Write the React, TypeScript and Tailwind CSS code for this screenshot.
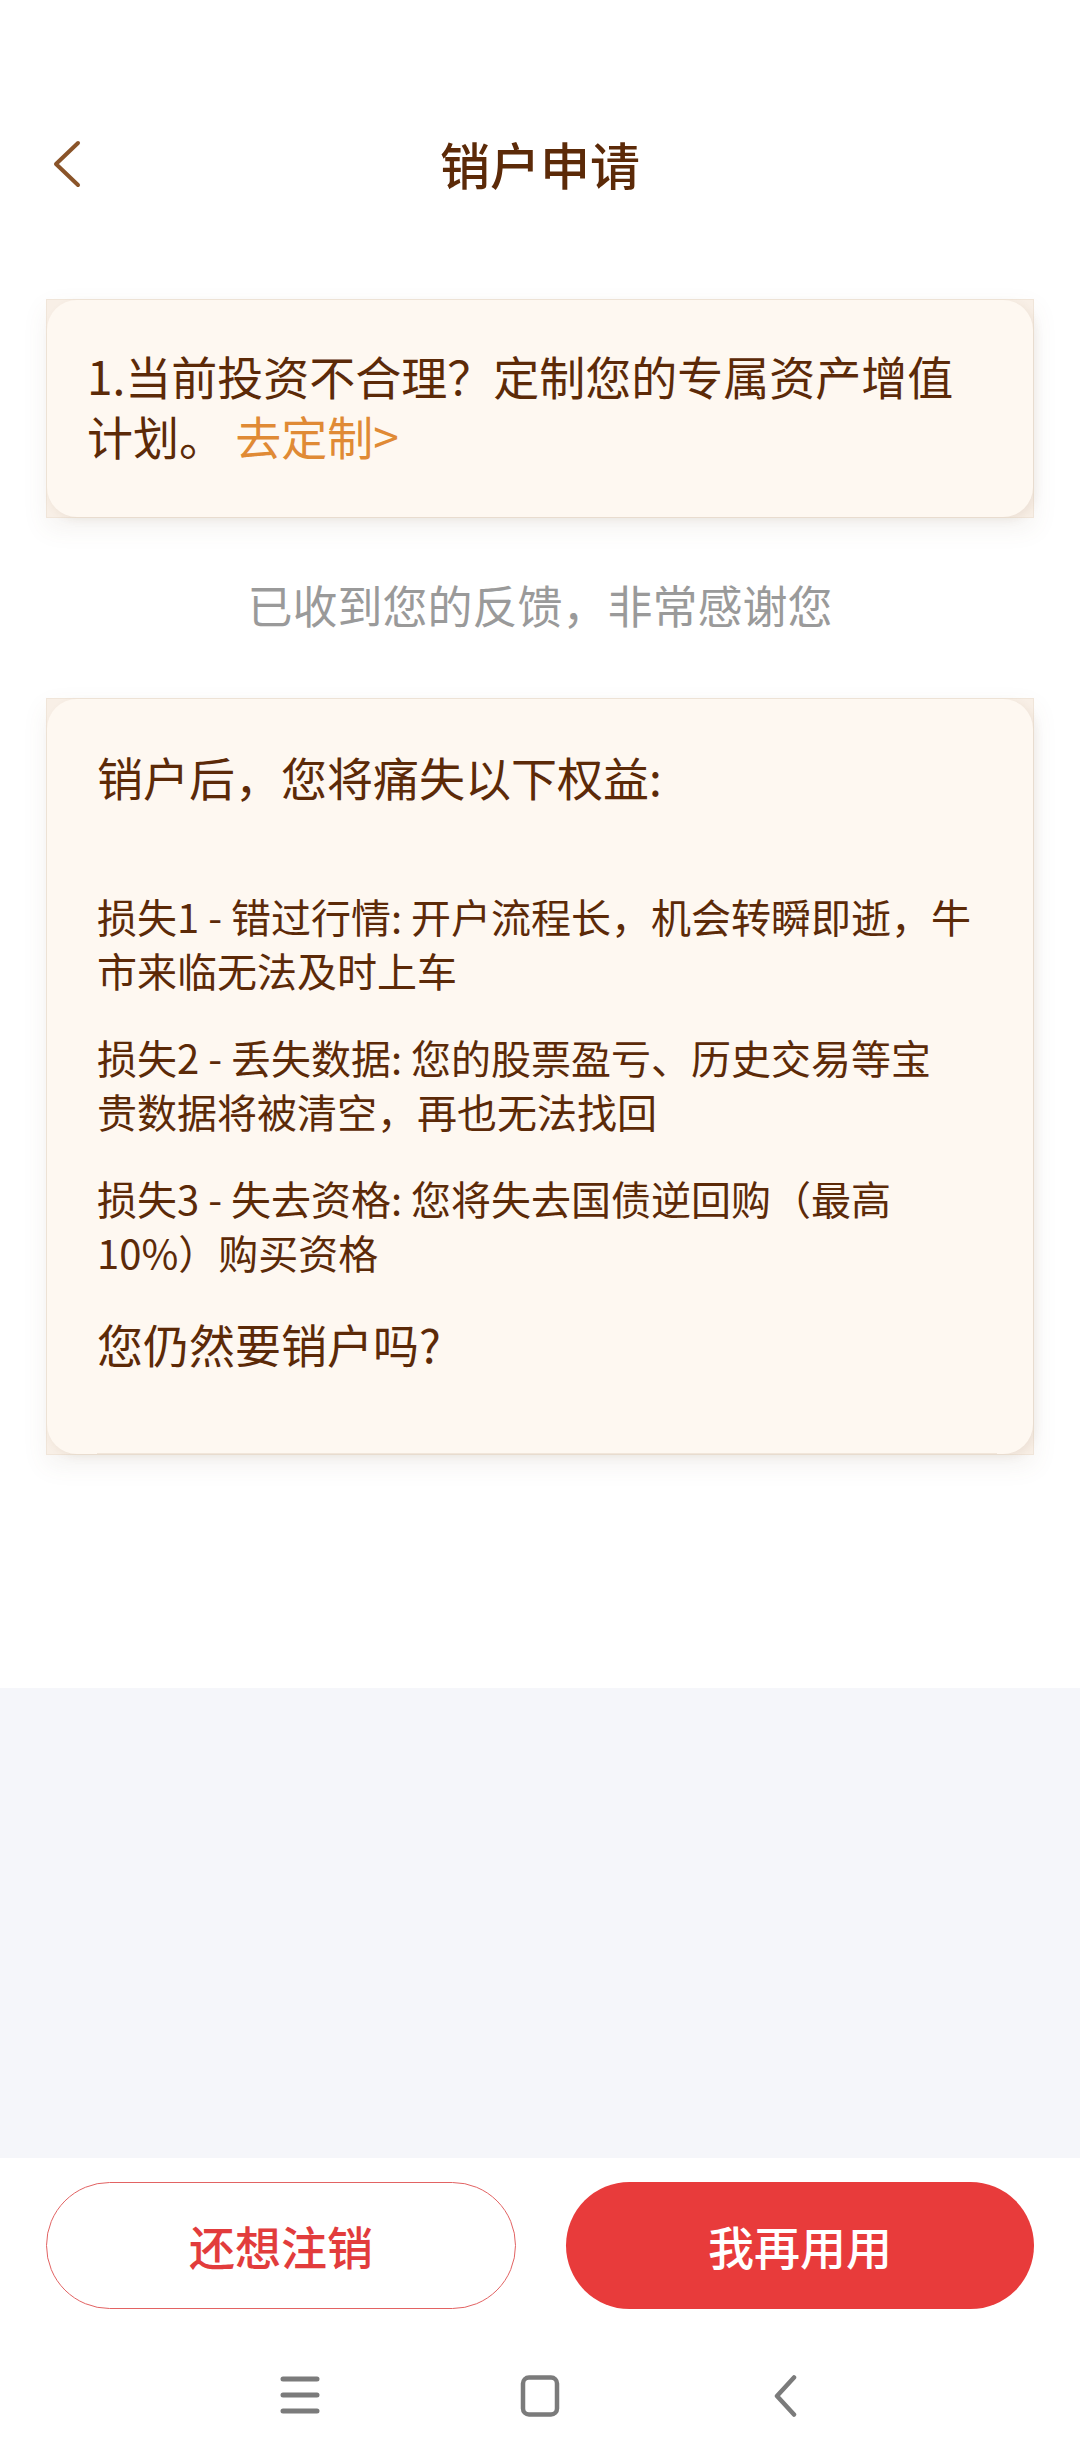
const font = { fontFamily: '"Noto Sans CJK SC", "Noto Sans", sans-serif' }

function BackIcon() {
  return (
    <svg width="32" height="48" viewBox="0 0 32 48" fill="none">
      <path d="M26 3 L4 24 L26 45" stroke="#8a5429" strokeWidth="4" strokeLinecap="round" strokeLinejoin="round" />
    </svg>
  )
}

function NavBar() {
  return (
    <div className="flex h-[151px] items-start justify-center gap-[200px] pt-[66px]">
      <svg width="40" height="40" viewBox="0 0 40 40" fill="none">
        <path d="M3 4 H37 M3 20 H37 M3 36 H37" stroke="#7b7b7b" strokeWidth="5" strokeLinecap="round" />
      </svg>
      <svg width="40" height="42" viewBox="0 0 40 42" fill="none">
        <rect x="3" y="2.5" width="34" height="37" rx="6" stroke="#7b7b7b" strokeWidth="4.5" />
      </svg>
      <svg width="40" height="42" viewBox="0 0 40 42" fill="none">
        <path d="M34 2.5 L17 21 L34 39.5" stroke="#7b7b7b" strokeWidth="4.5" strokeLinecap="round" strokeLinejoin="round" />
      </svg>
    </div>
  )
}

export default function App() {
  return (
    <div className="flex h-[2460px] w-[1080px] flex-col bg-white" style={font}>
      {/* top content */}
      <div className="h-[1688px] bg-white pt-[98px]">
        <div className="grid h-[130px] grid-cols-[160px_1fr_160px] items-center">
          <div className="pl-[52px] pt-[2px]">
            <BackIcon />
          </div>
          <h1 className="text-center text-[50px] font-medium leading-none text-[#5c2a08]">销户申请</h1>
          <div />
        </div>

        <div className="mx-[46px] mt-[71px] border border-[#f0e5d9] bg-[#f8efe6] shadow-[0_10px_24px_rgba(120,90,60,0.08)]">
          <div className="rounded-[30px] bg-[#fef8f1] pb-[52px] pl-[40px] pr-[36px] pt-[45px] text-[46px] leading-[60px] text-[#5c2a08] shadow-[3px_3px_8px_rgba(120,80,40,0.08)]">
            1.当前投资不合理？定制您的专属资产增值
            <br />
            计划。 <span className="text-[#e08a35]">去定制&gt;</span>
          </div>
        </div>

        <p className="mt-[57px] text-center text-[45px] leading-[60px] text-[#9a9a9a]">已收到您的反馈，非常感谢您</p>

        <div className="mx-[46px] mt-[63px] border border-[#f0e5d9] bg-[#f8efe6] shadow-[0_10px_24px_rgba(120,90,60,0.08)]">
          <div className="rounded-[30px] bg-[#fef8f1] pl-[50px] pr-[36px] pt-[47px] text-[#5c2a08] shadow-[3px_3px_8px_rgba(120,80,40,0.08)]">
            <h2 className="text-[46px] leading-[60px]">销户后，您将痛失以下权益:</h2>
            <div className="mt-[83px] flex flex-col gap-[33px] text-[40px] leading-[54px]">
              <p>
                损失1 - 错过行情: 开户流程长，机会转瞬即逝，牛
                <br />
                市来临无法及时上车
              </p>
              <p>
                损失2 - 丢失数据: 您的股票盈亏、历史交易等宝
                <br />
                贵数据将被清空，再也无法找回
              </p>
              <p>
                损失3 - 失去资格: 您将失去国债逆回购（最高
                <br />
                10%）购买资格
              </p>
            </div>
            <p className="mt-[34px] text-[46px] leading-[60px]">您仍然要销户吗?</p>
            <div className="mt-[80px] h-px bg-[#f1e6da]" />
          </div>
        </div>
      </div>

      {/* grey filler */}
      <div className="flex-1 bg-[#f5f6fa]" />

      {/* bottom actions */}
      <div className="bg-white">
        <div className="flex gap-[50px] px-[46px] pt-[24px]">
          <button className="flex h-[127px] flex-1 items-center justify-center rounded-full border border-[#e26363] bg-white text-[46px] font-medium text-[#e23c3c]">
            还想注销
          </button>
          <button className="flex h-[127px] flex-1 items-center justify-center rounded-full bg-[#e83b3b] text-[46px] font-medium text-white">
            我再用用
          </button>
        </div>
        <NavBar />
      </div>
    </div>
  )
}
